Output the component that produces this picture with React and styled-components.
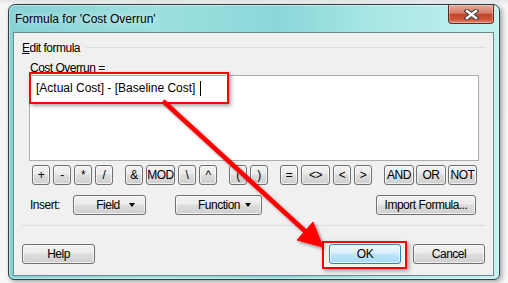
import React from 'react';
import styled, { createGlobalStyle } from 'styled-components';

const GlobalStyle = createGlobalStyle`
  html, body {
    margin: 0;
    padding: 0;
    background: #f4f5f6;
  }
  body {
    font-family: "Liberation Sans", Arial, sans-serif;
    font-size: 12px;
    letter-spacing: -0.5px;
    color: #000;
  }
`;

const Page = styled.div`
  position: relative;
  width: 508px;
  height: 283px;
  overflow: hidden;
  padding: 4px 0 0 8px;
  box-sizing: border-box;
  background: linear-gradient(180deg, #e2e4e6 0px, #f3f4f5 4px, #f6f7f8 100%);
`;

const Window = styled.div`
  width: 492px;
  height: 276px;
  box-sizing: border-box;
  display: flex;
  flex-direction: column;
  border: 1px solid #2f3d42;
  border-radius: 7px 7px 6px 6px;
  background: linear-gradient(90deg, #84d2d4 0%, #9ee0e0 30%, #8ad7d8 55%, #a9e7e6 75%, #c3f1f0 100%);
  box-shadow: inset 0 0 0 1px rgba(255, 255, 255, 0.45), 2px 2px 5px rgba(0, 0, 0, 0.35);
`;

const TitleBar = styled.div`
  height: 27px;
  flex-shrink: 0;
  display: flex;
  align-items: center;
  padding: 0 5px 0 6px;
`;

const Title = styled.span`
  font-size: 12px;
  letter-spacing: 0;
  padding-top: 1px;
  text-shadow: 0 0 6px rgba(255, 255, 255, 0.9);
`;

const CloseButton = styled.div`
  margin-left: auto;
  align-self: flex-start;
  width: 46px;
  height: 19px;
  box-sizing: border-box;
  display: flex;
  align-items: center;
  justify-content: center;
  border: 1px solid #5b2a22;
  border-top: none;
  border-radius: 0 0 4px 4px;
  background: linear-gradient(180deg, #e9a897 0%, #d67e69 45%, #c4442a 52%, #cf5237 80%, #e48a6c 100%);
  box-shadow: inset 0 0 0 1px rgba(255, 255, 255, 0.3);
`;

const Client = styled.div`
  flex: 1;
  margin: 0 5px 3px 4px;
  border: 1px solid #6f878c;
  background: #f0f0f0;
  padding: 7px 7px 0 8px;
  display: flex;
  flex-direction: column;
`;

const GroupHeader = styled.div`
  display: flex;
  align-items: center;
  height: 15px;
`;

const GroupLabel = styled.span`
  u {
    text-decoration: underline;
  }
`;

const GroupLine = styled.div`
  flex: 1;
  height: 1px;
  margin-left: 6px;
  background: #d5dfe5;
`;

const GroupBody = styled.div`
  padding: 0 7px;
  display: flex;
  flex-direction: column;
`;

const FieldLabel = styled.div`
  margin: 6px 0 0 1px;
  height: 14px;
  line-height: 14px;
`;

const FormulaBox = styled.div`
  height: 86px;
  box-sizing: border-box;
  border: 1px solid #abadb3;
  background: #fff;
  padding: 5px 6px;
  display: flex;
  align-items: flex-start;
  font-size: 12px;
  letter-spacing: 0;
  line-height: 15px;
`;

const Caret = styled.span`
  display: inline-block;
  width: 1px;
  height: 15px;
  margin-left: 5px;
  background: #000;
`;

const OpRow = styled.div`
  display: flex;
  gap: 12px;
  margin: 4px 0 0 3px;
`;

const OpGroup = styled.div`
  display: flex;
  gap: ${p => p.$gap ?? 3}px;
`;

const Button = styled.div`
  width: ${p => p.$w}px;
  height: 20px;
  box-sizing: border-box;
  display: flex;
  align-items: center;
  justify-content: center;
  padding-left: ${p => p.$pl || 0}px;
  border: 1px solid ${p => (p.$primary ? '#3c7fb1' : '#707070')};
  border-radius: 3px;
  background: ${p =>
    p.$primary
      ? 'linear-gradient(180deg, #eaf6fd 0%, #d9f0fc 45%, #bee6fd 50%, #a7d9f5 100%)'
      : 'linear-gradient(180deg, #f2f2f2 0%, #ebebeb 45%, #dddddd 50%, #cfcfcf 100%)'};
  box-shadow: inset 0 0 0 1px rgba(255, 255, 255, 0.65);
  white-space: nowrap;
`;

const DropCaret = styled.span`
  display: inline-block;
  width: 0;
  height: 0;
  margin-left: ${p => p.$ml || 9}px;
  border-left: 3.5px solid transparent;
  border-right: 3.5px solid transparent;
  border-top: 4px solid #000;
`;

const InsertRow = styled.div`
  display: flex;
  align-items: center;
  margin-top: 10px;
`;

const InsertLabel = styled.span`
  width: 43px;
  margin-left: 1px;
`;

const Separator = styled.div`
  height: 1px;
  margin-top: 10px;
  background: #d5dfe5;
`;

const BottomRow = styled.div`
  display: flex;
  margin-top: 18px;
  padding-right: 1px;
`;

const Callout = styled.div`
  position: absolute;
  left: ${p => p.$x}px;
  top: ${p => p.$y}px;
  width: ${p => p.$w}px;
  height: ${p => p.$h}px;
  box-sizing: border-box;
  border: 2px solid #ff0000;
  box-shadow: inset 0 0 0 1px rgba(255, 255, 255, 0.7), 2px 2px 4px rgba(0, 0, 0, 0.35);
  pointer-events: none;
`;

const ArrowLayer = styled.svg`
  position: absolute;
  left: 0;
  top: 0;
  pointer-events: none;
`;

const ops = [
  [['+', 18], ['-', 18], ['*', 18], ['/', 18]],
  [['&', 18], ['MOD', 29], ['\\', 18], ['^', 18]],
  [['(', 18], [')', 18]],
  [['=', 18], ['<>', 29], ['<', 18], ['>', 18]],
  [['AND', 30], ['OR', 30], ['NOT', 29]],
];

export default function App() {
  return (
    <>
      <GlobalStyle />
      <Page>
        <Window>
          <TitleBar>
            <Title>Formula for 'Cost Overrun'</Title>
            <CloseButton>
              <svg width="15" height="11" viewBox="0 0 15 11">
                <path d="M3 2 L12 9 M12 2 L3 9" stroke="#3b3b3b" strokeWidth="4.6" strokeLinecap="square" />
                <path d="M3 2 L12 9 M12 2 L3 9" stroke="#fff" strokeWidth="2.4" strokeLinecap="square" />
              </svg>
            </CloseButton>
          </TitleBar>
          <Client>
            <GroupHeader>
              <GroupLabel>
                <u>E</u>dit formula
              </GroupLabel>
              <GroupLine />
            </GroupHeader>
            <GroupBody>
              <FieldLabel>Cost Overrun =</FieldLabel>
              <FormulaBox>
                [Actual Cost] - [Baseline Cost]
                <Caret />
              </FormulaBox>
              <OpRow>
                {ops.map((group, i) => (
                  <OpGroup key={i} $gap={i === 4 ? 2 : 3}>
                    {group.map(([label, w]) => (
                      <Button key={label} $w={w}>
                        {label}
                      </Button>
                    ))}
                  </OpGroup>
                ))}
              </OpRow>
              <InsertRow>
                <InsertLabel>Insert:</InsertLabel>
                <Button $w={73} $pl={12}>
                  Field
                  <DropCaret />
                </Button>
                <Button $w={87} $pl={12} style={{ marginLeft: 29 }}>
                  Function
                  <DropCaret $ml={5} />
                </Button>
                <Button $w={100} style={{ marginLeft: 'auto', marginRight: 3 }}>
                  Import Formula...
                </Button>
              </InsertRow>
            </GroupBody>
            <Separator />
            <BottomRow>
              <Button $w={73}>Help</Button>
              <Button $w={72} $primary style={{ marginLeft: 'auto' }}>
                OK
              </Button>
              <Button $w={72} style={{ marginLeft: 12 }}>
                Cancel
              </Button>
            </BottomRow>
          </Client>
        </Window>

        <Callout $x={29} $y={72} $w={200} $h={32} />
        <Callout $x={322} $y={241} $w={85} $h={28} />
        <ArrowLayer width="508" height="283" viewBox="0 0 508 283">
          <defs>
            <filter id="shadow" x="-20%" y="-20%" width="140%" height="140%">
              <feDropShadow dx="2" dy="2" stdDeviation="1.5" floodColor="#000" floodOpacity="0.4" />
            </filter>
          </defs>
          <g filter="url(#shadow)" fill="#ff0000" stroke="#ff0000">
            <line x1="163" y1="101" x2="306" y2="232" strokeWidth="4.5" />
            <polygon points="323,247 297,240 313,222" strokeWidth="1" strokeLinejoin="round" />
          </g>
        </ArrowLayer>
      </Page>
    </>
  );
}
